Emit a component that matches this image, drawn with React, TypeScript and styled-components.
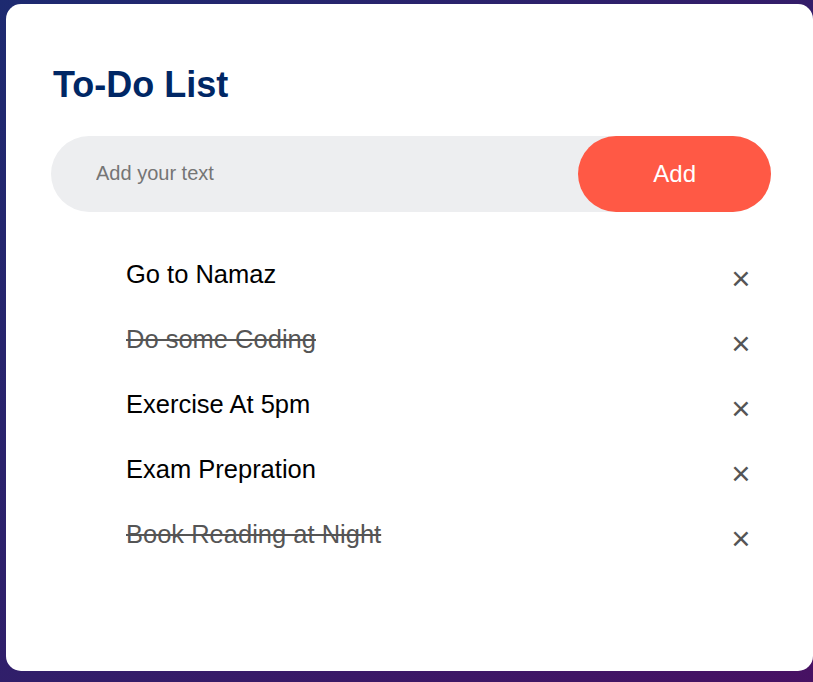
import React, { useState } from "react";
import styled, { createGlobalStyle } from "styled-components";

const GlobalStyle = createGlobalStyle`
  * { margin: 0; padding: 0; box-sizing: border-box; }
  body { margin: 0; font-family: "Liberation Sans", Arial, sans-serif; }
`;

const Page = styled.div`
  width: 100%;
  min-height: 682px;
  height: 682px;
  background: linear-gradient(135deg, #1d2a70, #471163);
  padding: 4px 0 11px 6px;
  display: flex;
`;

const Card = styled.div`
  flex: 1;
  background: #fff;
  border-radius: 15px;
  padding: 60px 42px 60px 45px;
`;

const Title = styled.h2`
  color: #002765;
  font-size: 36px;
  font-weight: bold;
  line-height: normal;
  margin-bottom: 30px;
  padding-left: 2px;
`;

const InputRow = styled.div`
  display: flex;
  align-items: center;
  justify-content: space-between;
  background: #edeef0;
  border-radius: 45px;
  padding-left: 30px;
  margin-bottom: 30px;
`;

const TextInput = styled.input`
  flex: 1;
  border: none;
  outline: none;
  background: transparent;
  padding: 15px;
  font-family: "Liberation Sans", Arial, sans-serif;
  font-size: 20px;
  color: #000;
  &::placeholder { color: #757575; }
`;

const AddButton = styled.button`
  border: none;
  outline: none;
  padding: 24px 75px;
  background: #ff5945;
  color: #fff;
  font-family: "Liberation Sans", Arial, sans-serif;
  font-size: 24px;
  line-height: 27.6px;
  cursor: pointer;
  border-radius: 60px;
`;

const List = styled.ul`
  list-style: none;
`;

const Item = styled.li<{ $checked: boolean }>`
  position: relative;
  font-size: 25.5px;
  line-height: 29px;
  padding: 18px 12px 18px 75px;
  user-select: none;
  cursor: pointer;
  color: ${(p) => (p.$checked ? "#555" : "#000")};
  text-decoration: ${(p) => (p.$checked ? "line-through" : "none")};
`;

const Remove = styled.span`
  position: absolute;
  right: 0;
  top: 7.5px;
  width: 60px;
  height: 60px;
  font-size: 33px;
  color: #555;
  line-height: 60px;
  text-align: center;
  border-radius: 50%;
  text-decoration: none;
  display: inline-block;
`;

const initial = [
  { text: "Go to Namaz", checked: false },
  { text: "Do some Coding", checked: true },
  { text: "Exercise At 5pm", checked: false },
  { text: "Exam Prepration", checked: false },
  { text: "Book Reading at Night", checked: true },
];

export default function App() {
  const [items, setItems] = useState(initial);
  const [value, setValue] = useState("");

  const add = () => {
    if (!value.trim()) return;
    setItems([...items, { text: value, checked: false }]);
    setValue("");
  };

  return (
    <>
      <GlobalStyle />
      <Page>
        <Card>
          <Title>To-Do List</Title>
          <InputRow>
            <TextInput
              placeholder="Add your text"
              value={value}
              onChange={(e) => setValue(e.target.value)}
            />
            <AddButton onClick={add}>Add</AddButton>
          </InputRow>
          <List>
            {items.map((it, i) => (
              <Item
                key={i}
                $checked={it.checked}
                onClick={() =>
                  setItems(items.map((x, j) => (j === i ? { ...x, checked: !x.checked } : x)))
                }
              >
                {it.text}
                <Remove
                  onClick={(e) => {
                    e.stopPropagation();
                    setItems(items.filter((_, j) => j !== i));
                  }}
                >
                  {"\u00d7"}
                </Remove>
              </Item>
            ))}
          </List>
        </Card>
      </Page>
    </>
  );
}
